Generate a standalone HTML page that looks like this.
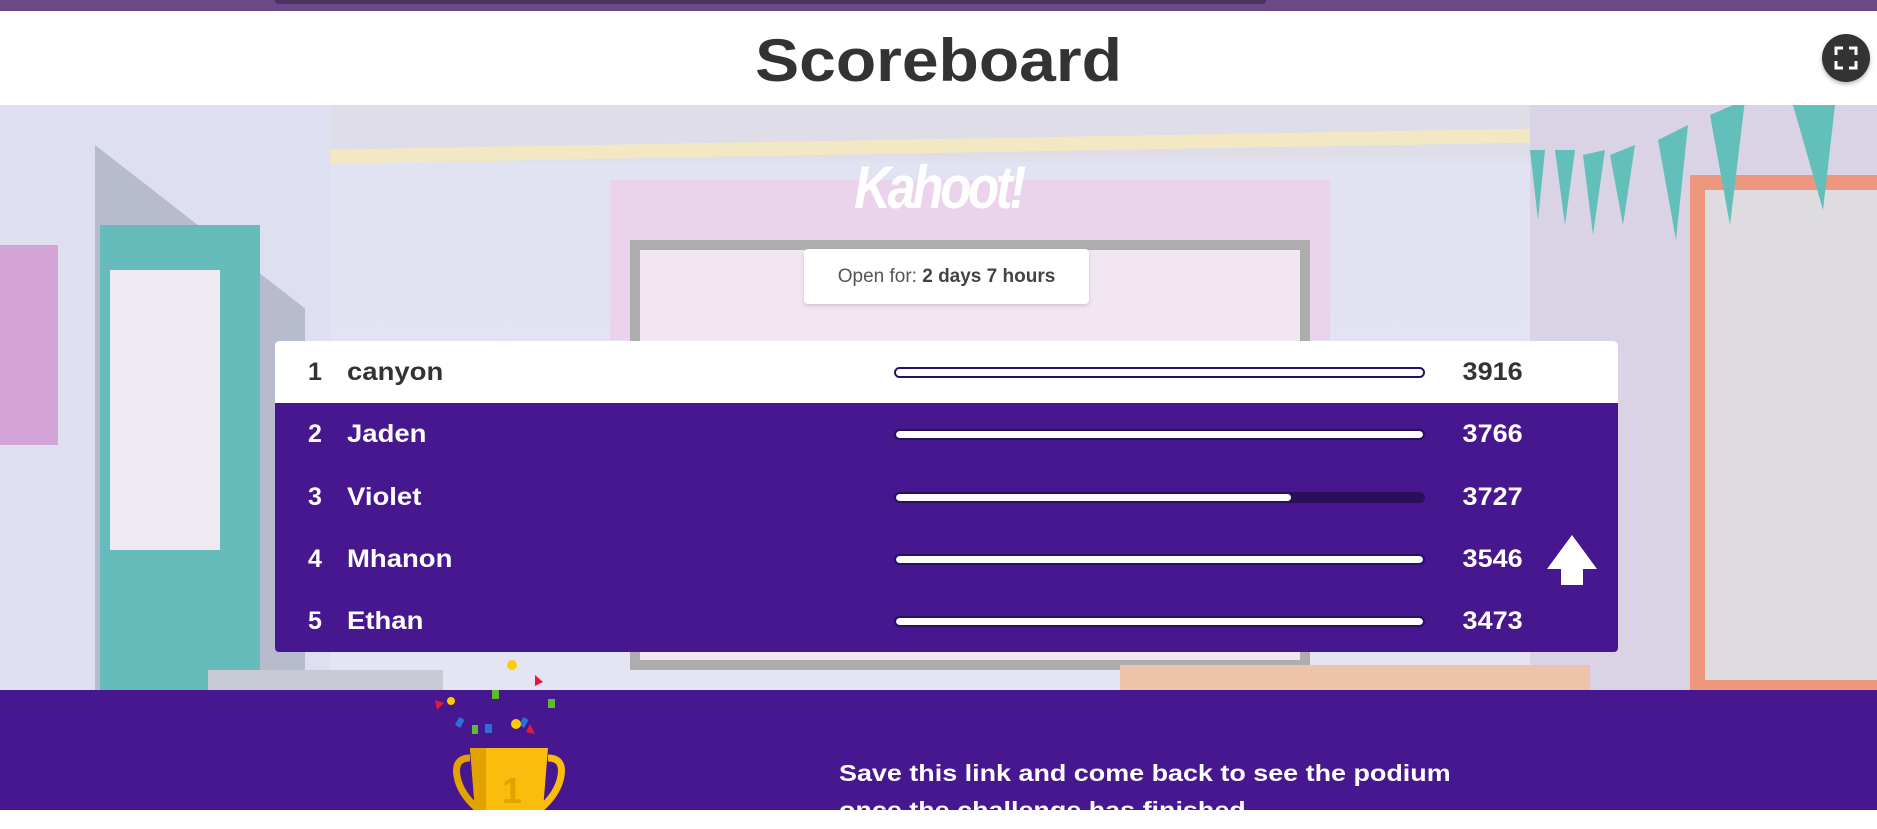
<!DOCTYPE html>
<html><head><meta charset="utf-8"><style>
*{margin:0;padding:0;box-sizing:border-box}
body{width:1877px;height:810px;overflow:hidden;font-family:"Liberation Sans",sans-serif;position:relative;background:#fff}
.abs{position:absolute}
.row{position:absolute;left:275px;width:1343px;height:62px;color:#fff;font-weight:bold;font-size:25px}
.row .rk{position:absolute;left:28px;width:24px;text-align:center;top:17px}
.row .nm{position:absolute;left:72px;top:17px;transform:scaleX(1.1);transform-origin:left}
.row .sc{position:absolute;right:95px;top:17px;transform:scaleX(1.08);transform-origin:right}
.row .bar{position:absolute;left:619px;top:26px;width:531px;height:11px;border-radius:6px;background:#2a0f5a;border:2px solid #2a0f5a;overflow:hidden}
.row .bar i{display:block;height:100%;background:#fff;border-radius:4px}
</style></head><body>
<div class="abs" style="left:0;top:0;width:1877px;height:11px;background:#6b4a87"></div>
<div class="abs" style="left:275px;top:0;width:991px;height:4px;background:#4a3263;border-radius:0 0 3px 3px"></div>
<div class="abs" style="left:0;top:11px;width:1877px;height:94px;background:#fff"></div>
<div class="abs" style="left:0;top:26px;width:1877px;text-align:center;font-size:60px;font-weight:bold;color:#333;transform:scaleX(1.1)">Scoreboard</div>
<div class="abs" style="left:1822px;top:34px;width:48px;height:48px;border-radius:50%;background:#333;box-shadow:0 2px 4px rgba(0,0,0,.3)">
<svg width="48" height="48" viewBox="0 0 48 48"><path d="M14 21v-7h7M27 14h7v7M34 27v7h-7M21 34h-7v-7" fill="none" stroke="#fff" stroke-width="3"/></svg></div>
<!-- scene -->
<div class="abs" style="left:0;top:105px;width:1877px;height:585px;background:linear-gradient(#d8d6e0 0,#d8d6e0 50px,#dedff0 60px,#e0e0f2 100%);overflow:hidden">
 <div class="abs" style="left:230px;top:35px;width:1300px;height:14px;background:#f6e6a8;transform:skewY(-1deg)"></div>
 <div class="abs" style="left:0;top:0;width:330px;height:585px;background:#d8dbf0"></div>
 <div class="abs" style="left:95px;top:40px;width:210px;height:545px;background:#9aa3b8;clip-path:polygon(0 0,100% 30%,100% 100%,0 100%)"></div>
 <div class="abs" style="left:100px;top:120px;width:160px;height:465px;background:#1fa39a"></div>
 <div class="abs" style="left:110px;top:165px;width:110px;height:280px;background:#f1e8f2"></div>
 <div class="abs" style="left:0;top:140px;width:58px;height:200px;background:#c87fc5"></div>
 <div class="abs" style="left:610px;top:75px;width:720px;height:160px;background:#ecc7e6"></div>
 <div class="abs" style="left:630px;top:135px;width:680px;height:430px;background:#8d8d88"></div>
 <div class="abs" style="left:640px;top:145px;width:660px;height:410px;background:#f6e3f0"></div>
 <div class="abs" style="left:1530px;top:0;width:347px;height:585px;background:#cfc6dc"></div>
 <div class="abs" style="left:1690px;top:70px;width:187px;height:515px;background:#ee6a3f"></div>
 <div class="abs" style="left:1705px;top:85px;width:172px;height:490px;background:#d8d4d6"></div>
 <div class="abs" style="left:1120px;top:560px;width:470px;height:30px;background:#eeb080"></div>
 <div class="abs" style="left:208px;top:565px;width:235px;height:30px;background:#b9b9c4"></div>
 <svg class="abs" style="left:1530px;top:0" width="347" height="200"><g fill="#1aa898"><path d="M0 45l15 0-7 70z"/><path d="M25 45l20 0-10 75z"/><path d="M53 50l22-5-12 85z"/><path d="M80 50l25-10-12 80z"/><path d="M128 35l30-15-12 115z"/><path d="M180 10l35-15-15 125z"/><path d="M263 0l42 0-12 105z"/></g></svg>
 <div class="abs" style="left:0;top:0;width:1877px;height:585px;background:rgba(235,235,245,.35)"></div>
</div>
<div class="abs" style="left:0;top:153px;width:1877px;text-align:center;font-size:60px;font-weight:bold;color:#fff;letter-spacing:-4px;font-style:italic;transform:scaleX(.85)">Kahoot!</div>
<div class="abs" style="left:804px;top:249px;width:285px;height:55px;background:#fff;border-radius:4px;box-shadow:0 2px 4px rgba(0,0,0,.15);text-align:center;line-height:55px;font-size:19px;color:#555">Open for: <b style="color:#444">2 days 7 hours</b></div>
<!-- table -->
<div class="abs" style="left:275px;top:341px;width:1343px;height:311px;background:#46178f;border-radius:4px"></div>
<div class="row" style="top:341px;background:#fff;color:#333;border-radius:4px 4px 0 0"><span class="rk">1</span><span class="nm">canyon</span><div class="bar" style="background:#fff"><i style="width:100%;background:#fff"></i></div><span class="sc">3916</span></div>
<div class="row" style="top:403px"><span class="rk">2</span><span class="nm">Jaden</span><div class="bar"><i style="width:100%"></i></div><span class="sc">3766</span></div>
<div class="row" style="top:466px"><span class="rk">3</span><span class="nm">Violet</span><div class="bar"><i style="width:75%"></i></div><span class="sc">3727</span></div>
<div class="row" style="top:528px"><span class="rk">4</span><span class="nm">Mhanon</span><div class="bar"><i style="width:100%"></i></div><span class="sc">3546</span></div>
<div class="row" style="top:590px"><span class="rk">5</span><span class="nm">Ethan</span><div class="bar"><i style="width:100%"></i></div><span class="sc">3473</span></div>
<svg class="abs" style="left:1547px;top:535px" width="50" height="50"><path d="M25 0L50 34H36V50H14V34H0Z" fill="#fff"/></svg>
<!-- bottom -->
<div class="abs" style="left:0;top:690px;width:1877px;height:120px;background:#46178f"></div>
<svg class="abs" style="left:430px;top:655px" width="170" height="155">
<circle cx="82" cy="10" r="5" fill="#fc0"/><path d="M105 20l8 7-8 4z" fill="#e21b3c"/><path d="M5 45l9 3-7 7z" fill="#e21b3c"/><rect x="27" y="63" width="6" height="9" fill="#2a70d8" transform="rotate(30 30 67)"/><rect x="62" y="35" width="7" height="9" fill="#5bbd2b"/><rect x="91" y="63" width="6" height="9" fill="#2a70d8" transform="rotate(30 94 67)"/><rect x="118" y="44" width="7" height="9" fill="#5bbd2b"/><circle cx="21" cy="46" r="4" fill="#fc0"/><circle cx="86" cy="69" r="5" fill="#fc0"/><rect x="55" y="69" width="7" height="9" fill="#2a70d8"/><rect x="42" y="70" width="6" height="9" fill="#5bbd2b"/><path d="M100 69l5 10-9-2z" fill="#e21b3c"/>
<path d="M40 93h78l-5 62H45z" fill="#fbbd0c"/><path d="M40 93h16v62h-11z" fill="#e2a300"/><path d="M40 103q-16 0-13 18t22 34" fill="none" stroke="#e2a300" stroke-width="7"/><path d="M118 103q16 0 13 18t-22 34" fill="none" stroke="#fbbd0c" stroke-width="7"/><text x="72" y="148" font-family="Liberation Sans" font-weight="bold" font-size="36" fill="#e2a300">1</text>
</svg>
<div class="abs" style="left:839px;top:755px;font-size:23px;font-weight:bold;color:#fff;line-height:37px;transform:scaleX(1.17);transform-origin:left">Save this link and come back to see the podium<br>once the challenge has finished</div>
</body></html>
